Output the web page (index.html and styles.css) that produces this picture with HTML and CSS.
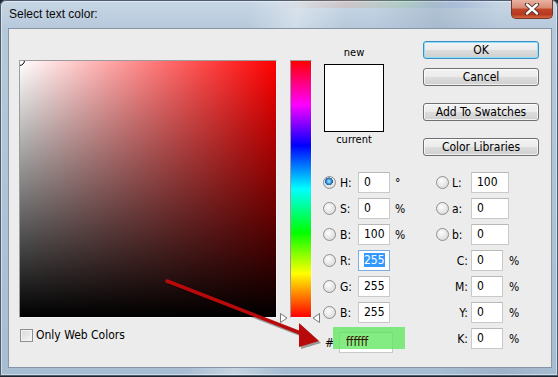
FILE: index.html
```html
<!DOCTYPE html>
<html lang="en">
<head>
    <meta charset="UTF-8">
    <title>Select text color</title>
    <link rel="stylesheet" href="styles.css">
</head>
<body>
    <div class="window">
        <div class="titlebar">
            <span class="title">Select text color:</span>
            <span class="close">
                <svg width="16" height="12" viewBox="0 0 16 12">
                    <path d="M3 1.5 L13 10.5 M13 1.5 L3 10.5" stroke="#4a2a22" stroke-width="4.2" stroke-linecap="round"/>
                    <path d="M3 1.5 L13 10.5 M13 1.5 L3 10.5" stroke="#fff" stroke-width="2.4" stroke-linecap="round"/>
                </svg>
            </span>
        </div>

        <div class="client">
            <div class="picker">
                <div class="picker-row">
                    <div class="field"><span class="marker"></span></div>
                    <div class="hue">
                        <div class="hue-bar"></div>
                        <svg class="tri tri-left" width="8" height="10" viewBox="0 0 8 10"><path d="M0.5 0.5 L7 5 L0.5 9.5 Z" fill="#fff" stroke="#777"/></svg>
                        <svg class="tri tri-right" width="8" height="10" viewBox="0 0 8 10"><path d="M7.5 0.5 L1 5 L7.5 9.5 Z" fill="#fff" stroke="#777"/></svg>
                    </div>
                </div>
                <div class="webcolors"><span class="checkbox"></span>Only Web Colors</div>
            </div>

            <div class="side">
                <div class="side-top">
                    <div class="swatch">
                        <div class="swatch-label">new</div>
                        <div class="swatch-box"></div>
                        <div class="swatch-label">current</div>
                    </div>
                    <div class="buttons">
                        <button class="btn btn-default">OK</button>
                        <button class="btn btn-cancel">Cancel</button>
                        <button class="btn btn-gap">Add To Swatches</button>
                        <button class="btn btn-gap">Color Libraries</button>
                    </div>
                </div>

                <div class="fields">
                    <div class="col col-left">
                        <div class="row"><span class="radio checked"></span><span class="lbl">H:</span><span class="num">0</span><span class="unit">°</span></div>
                        <div class="row"><span class="radio"></span><span class="lbl">S:</span><span class="num">0</span><span class="unit">%</span></div>
                        <div class="row"><span class="radio"></span><span class="lbl">B:</span><span class="num">100</span><span class="unit">%</span></div>
                        <div class="row row-sep"><span class="radio"></span><span class="lbl">R:</span><span class="num num-focus"><span class="sel">255</span></span></div>
                        <div class="row"><span class="radio"></span><span class="lbl">G:</span><span class="num">255</span></div>
                        <div class="row"><span class="radio"></span><span class="lbl">B:</span><span class="num">255</span></div>
                        <div class="row row-hex"><span class="hash">#</span><span class="hex-wrap"><span class="num hex"><span class="hex-text">ffffff</span></span></span></div>
                    </div>
                    <div class="col col-right">
                        <div class="row"><span class="radio"></span><span class="lbl">L:</span><span class="num wide">100</span></div>
                        <div class="row"><span class="radio"></span><span class="lbl">a:</span><span class="num wide">0</span></div>
                        <div class="row"><span class="radio"></span><span class="lbl">b:</span><span class="num wide">0</span></div>
                        <div class="row row-sep"><span class="lbl lbl-cmyk">C:</span><span class="num">0</span><span class="unit pct">%</span></div>
                        <div class="row"><span class="lbl lbl-cmyk">M:</span><span class="num">0</span><span class="unit pct">%</span></div>
                        <div class="row"><span class="lbl lbl-cmyk">Y:</span><span class="num">0</span><span class="unit pct">%</span></div>
                        <div class="row"><span class="lbl lbl-cmyk">K:</span><span class="num">0</span><span class="unit pct">%</span></div>
                    </div>
                </div>
            </div>
        </div>

        <!-- annotation arrow -->
        <svg class="arrow" width="558" height="377" viewBox="0 0 558 377">
            <g transform="translate(2,2)" opacity="0.35">
                <path d="M167 281 L303 334" stroke="#000" stroke-width="4"/>
                <path d="M319 341 L299 323 L299 347 Z" fill="#000"/>
            </g>
            <path d="M167 281 L303 334" stroke="#b80a0a" stroke-width="3.5" stroke-linecap="round"/>
            <path d="M319 341 L299 323 L299 347 Z" fill="#b80a0a"/>
        </svg>
    </div>
</body>
</html>
```

FILE: styles.css
```css
* {
    box-sizing: border-box;
}
body {
    margin: 0;
    width: 558px;
    height: 377px;
    overflow: hidden;
    background: #1d2630;
    font-family: "DejaVu Sans Condensed", "DejaVu Sans", sans-serif;
    font-stretch: condensed;
    font-size: 12px;
    color: #000;
}
.window {
    position: relative;
    width: 558px;
    height: 376px;
    border-radius: 6px 6px 0 0;
    background:
        linear-gradient(100deg, rgba(255,255,255,0) 40%, rgba(255,255,255,0.35) 48%, rgba(255,255,255,0) 56%),
        linear-gradient(80deg, rgba(255,255,255,0) 70%, rgba(140,160,180,0.35) 80%, rgba(255,255,255,0) 90%),
        linear-gradient(180deg, #c8d7e5 0, #b6c9db 28px, #a7bdd2 100%);
    box-shadow: inset 0 0 0 1px #4d5d6e, inset 0 0 0 2px rgba(255,255,255,0.45);
}
.titlebar {
    height: 28px;
    display: flex;
    justify-content: space-between;
    align-items: flex-start;
    background: linear-gradient(90deg, rgba(255,255,255,0) 50%, rgba(220,150,120,0.25) 62%, rgba(140,200,140,0.25) 72%, rgba(120,140,220,0.2) 82%, rgba(255,255,255,0) 90%) top / 100% 8px no-repeat;
}
.title {
    font-family: "Liberation Sans", Arial, sans-serif;
    font-stretch: normal;
    font-size: 12px;
    padding: 7px 0 0 9px;
    color: #0a0a0a;
}
.close {
    width: 42px;
    height: 19px;
    margin-right: 5px;
    display: flex;
    align-items: center;
    justify-content: center;
    border: 1px solid #7a3328;
    border-top: none;
    border-radius: 0 0 5px 5px;
    background: linear-gradient(180deg, #e9b3a3 0, #d78a72 45%, #c1452a 50%, #b6391f 80%, #d66a40 100%);
}
.client {
    display: flex;
    margin-left: 8px;
    width: 544px;
    height: 340px;
    padding: 12px 0 0 10px;
    border: 1px solid #8696a6;
    background: #ececec;
}
.picker {
    width: 304px;
    margin-top: 19px;
}
.picker-row {
    display: flex;
    align-items: flex-start;
}
.field {
    position: relative;
    overflow: hidden;
    width: 258px;
    height: 258px;
    border-top: 1px solid #9c9c9c;
    border-left: 1px solid #9c9c9c;
    border-right: 1px solid #f4f4f4;
    border-bottom: 1px solid #f4f4f4;
    background:
        linear-gradient(to top, #000, rgba(0,0,0,0)),
        linear-gradient(to right, #fff, #f00);
}
.marker {
    position: absolute;
    left: -6px;
    top: -6px;
    width: 11px;
    height: 11px;
    border: 1px solid #000;
    border-radius: 50%;
}
.hue {
    position: relative;
    margin-left: 13px;
}
.hue-bar {
    width: 22px;
    height: 258px;
    border-top: 1px solid #9c9c9c;
    border-left: 1px solid #9c9c9c;
    border-right: 1px solid #f4f4f4;
    border-bottom: 1px solid #f4f4f4;
    background: linear-gradient(to bottom, #f00 0%, #f0f 17%, #00f 33%, #0ff 50%, #0f0 67%, #ff0 83%, #f00 100%);
}
.tri {
    position: absolute;
    top: 253px;
}
.tri-left {
    left: -10px;
}
.tri-right {
    left: 22px;
}
.webcolors {
    display: flex;
    align-items: center;
    margin-top: 10px;
    margin-left: 1px;
}
.checkbox {
    width: 13px;
    height: 13px;
    margin-right: 3px;
    border: 1px solid #8f8f8f;
    background: linear-gradient(135deg, #d8d8d8, #f6f6f6);
    box-shadow: inset 0 0 0 1px #f4f4f4;
}
.side {
    display: flex;
    flex-direction: column;
}
.side-top {
    display: flex;
}
.swatch {
    width: 100px;
    margin-top: 5px;
}
.swatch-label {
    width: 62px;
    height: 15px;
    text-align: center;
    font-size: 11px;
}
.swatch-box {
    width: 60px;
    height: 68px;
    margin: 3px 0 1px 1px;
    border: 1px solid #000;
    background: #fff;
}
.buttons {
    display: flex;
    flex-direction: column;
    width: 116px;
}
.btn {
    height: 18px;
    padding: 0;
    font: inherit;
    font-size: 12px;
    line-height: 15px;
    color: #000;
    border: 1px solid #707070;
    border-radius: 3px;
    background: linear-gradient(180deg, #f3f3f3 0, #ebebeb 50%, #dddddd 50%, #cfcfcf 100%);
    box-shadow: inset 0 0 0 1px rgba(255,255,255,0.7);
}
.btn-default {
    border-color: #3c8fc4;
    box-shadow: inset 0 0 0 1px #8ee0fa;
}
.btn-cancel {
    margin-top: 9px;
}
.btn-gap {
    margin-top: 17px;
}
.fields {
    display: flex;
    margin-top: 16px;
}
.col-left {
    width: 113px;
}
.row {
    display: flex;
    align-items: center;
    height: 21px;
    margin-bottom: 5px;
}
.row-sep {
    margin-top: 4px;
}
.radio {
    width: 13px;
    height: 13px;
    margin-right: 4px;
    border: 1px solid #8e8f8f;
    border-radius: 50%;
    background: radial-gradient(circle at 40% 35%, #fdfdfd 0, #e6e6e6 55%, #cfcfcf 100%);
}
.radio.checked {
    background:
        radial-gradient(circle at 45% 40%, #bdeaff 0, #3b9ee0 25%, #1a5c99 42%, rgba(0,0,0,0) 46%),
        radial-gradient(circle at 40% 35%, #fdfdfd 0, #e6e6e6 55%, #cfcfcf 100%);
}
.col-right .radio {
    margin-right: 3px;
}
.lbl {
    width: 18px;
}
.col-right .lbl {
    width: 19px;
}
.col-right .lbl-cmyk {
    width: 35px;
    padding-right: 3px;
    text-align: right;
}
.num {
    width: 32px;
    height: 21px;
    padding-left: 5px;
    line-height: 19px;
    border: 1px solid #c9c9c9;
    border-top-color: #b9b9b9;
    background: #fff;
}
.num.wide {
    width: 38px;
}
.num-focus {
    border-color: #7ab0e4;
}
.sel {
    background: #3399ff;
    color: #fff;
}
.unit {
    margin-left: 5px;
}
.unit.pct {
    margin-left: 6px;
}
.row-hex {
    align-items: flex-start;
}
.hash {
    width: 8px;
    margin: 8px 0 0 2px;
}
.hex-wrap {
    position: relative;
    width: 72px;
    height: 22px;
    margin-top: -1px;
    padding: 5px 0 0 6px;
}
.hex-wrap::after {
    content: "";
    position: absolute;
    inset: 0;
    background: rgba(100, 232, 100, 0.8);
}
.hex {
    display: block;
    width: 54px;
    padding-left: 6px;
}
.hex-text {
    position: relative;
    z-index: 1;
    color: #3a1400;
}
.arrow {
    position: absolute;
    left: 0;
    top: 0;
    pointer-events: none;
}
```
